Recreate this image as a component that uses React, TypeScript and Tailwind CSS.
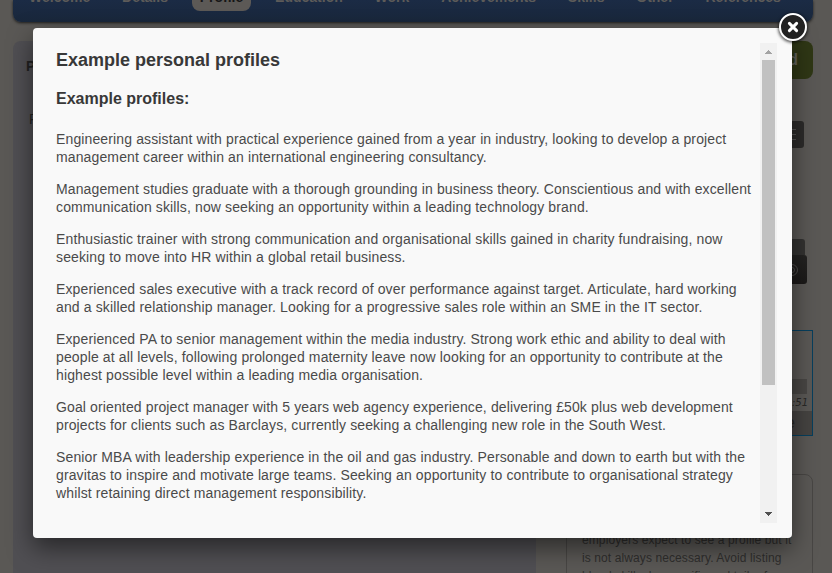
const navItems = ["Welcome", "Details", "Profile", "Education", "Work", "Achievements", "Skills", "Other", "References"];

const profiles = [
  ["Engineering assistant with practical experience gained from a year in industry, looking to develop a project", "management career within an international engineering consultancy."],
  ["Management studies graduate with a thorough grounding in business theory. Conscientious and with excellent", "communication skills, now seeking an opportunity within a leading technology brand."],
  ["Enthusiastic trainer with strong communication and organisational skills gained in charity fundraising, now", "seeking to move into HR within a global retail business."],
  ["Experienced sales executive with a track record of over performance against target. Articulate, hard working", "and a skilled relationship manager. Looking for a progressive sales role within an SME in the IT sector."],
  ["Experienced PA to senior management within the media industry. Strong work ethic and ability to deal with", "people at all levels, following prolonged maternity leave now looking for an opportunity to contribute at the", "highest possible level within a leading media organisation."],
  ["Goal oriented project manager with 5 years web agency experience, delivering £50k plus web development", "projects for clients such as Barclays, currently seeking a challenging new role in the South West."],
  ["Senior MBA with leadership experience in the oil and gas industry. Personable and down to earth but with the", "gravitas to inspire and motivate large teams. Seeking an opportunity to contribute to organisational strategy", "whilst retaining direct management responsibility."]
];

function TopNav() {
  return (
    <nav className="flex h-[22px] shrink-0 items-end rounded-b-lg bg-linear-to-b from-[#1b2b45] to-[#19273b] pl-2 shadow-[0_1px_3px_rgba(0,0,0,0.7)]">
      {navItems.map((item) => (
        <span
          key={item}
          className={`mr-[15.8px] mb-[11px] flex h-[30px] items-end rounded-lg px-2 pb-[6px] text-sm leading-[16px] font-bold ${
            item === "Profile" ? "bg-[#5c5956] text-[#161616]" : "text-[#5d5b59]"
          }`}
        >
          {item}
        </span>
      ))}
    </nav>
  );
}

function Sidebar() {
  return (
    <aside className="flex w-[247px] flex-col">
      <div className="flex h-[38px] items-center justify-end rounded-lg bg-[#2f3715] pr-[15px] text-base font-bold text-[#62635a]">Upload</div>
      <div className="mt-[42px] mr-[9px] flex h-[27px] items-center justify-end rounded-[3px] bg-[#2c2b2a] pr-2">
        <div className="flex w-3 flex-col gap-1">
          <span className="h-px bg-[#565453]" />
          <span className="h-px bg-[#565453]" />
          <span className="h-px bg-[#565453]" />
        </div>
      </div>
      <div className="mt-[91px] mr-2 h-4 rounded-t-[3px] bg-[#333231]" />
      <div className="mr-[6px] flex h-[29px] items-center justify-end rounded-[3px] bg-linear-to-b from-[#242322] to-[#1b1918] pr-2">
        <svg width="14" height="14" viewBox="0 0 14 14" fill="none" stroke="#4b4949">
          <circle cx="7" cy="7" r="5.5" />
          <circle cx="7" cy="7" r="2.5" />
        </svg>
      </div>
      <div className="mt-[46px] flex h-[106px] flex-col border border-[#073f5d]">
        <div className="mt-12 mr-[5px] h-[15px] shrink-0 bg-[#484644]" />
        <div className="flex h-[17px] shrink-0 items-center justify-end pr-1 font-['DejaVu_Sans',sans-serif] text-[10px] text-[#292827] italic">12:51</div>
        <div className="flex flex-1 items-center justify-end bg-[#454341] pr-[17px] text-base text-[#282726]">Time</div>
      </div>
      <div className="mt-[38px] h-[140px] rounded-lg border border-[#484644] px-[15px] pt-[56px] text-xs leading-[18px] tracking-[0.1px] whitespace-nowrap text-[#2f2e2d]">
        <p>employers expect to see a profile but it</p>
        <p>is not always necessary. Avoid listing</p>
        <p>bland skills, be specific and tailor for</p>
      </div>
    </aside>
  );
}

function Scrollbar() {
  return (
    <div className="flex w-[17px] shrink-0 flex-col items-center bg-[#f1f1f1]">
      <svg className="h-[17px] w-[17px] shrink-0" viewBox="0 0 17 17" fill="#a3a3a3" shapeRendering="crispEdges">
        <path d="M8 7h1v1h1v1h1v1h1v1H5v-1h1V9h1V8h1z" />
      </svg>
      <div className="h-[325px] w-[13px] bg-[#c1c1c1]" />
      <svg className="mt-auto h-[17px] w-[17px] shrink-0" viewBox="0 0 17 17" fill="#505050" shapeRendering="crispEdges">
        <path d="M5 6h7v1h-1v1h-1v1H9v1H8V9H7V8H6V7H5z" />
      </svg>
    </div>
  );
}

function ProfilesDialog() {
  return (
    <div role="dialog" className="absolute top-7 left-[33px] flex h-[510px] w-[759px] rounded bg-[#f9f9f9] p-[15px] text-[#4a4a4a] shadow-[0_10px_25px_rgba(0,0,0,0.5)]">
      <div className="min-w-0 flex-1 overflow-hidden pl-2 whitespace-nowrap">
        <h2 className="mt-[7px] text-lg leading-5 font-bold text-[#383838]">Example personal profiles</h2>
        <h3 className="mt-[19px] text-base leading-5 font-bold text-[#383838]">Example profiles:</h3>
        <div className="mt-[21px] space-y-[14px] text-sm leading-[18px] tracking-[0.128px]">
          {profiles.map((lines) => (
            <p key={lines[0]}>
              {lines.map((line) => (
                <span key={line} className="block">{line}</span>
              ))}
            </p>
          ))}
        </div>
      </div>
      <Scrollbar />
      <button type="button" aria-label="Close" className="absolute -top-[15px] -right-[15px] flex h-7 w-7 items-center justify-center rounded-full border-2 border-white bg-[#222] shadow-[0_1px_3px_1px_rgba(0,0,0,0.6)]">
        <svg width="12" height="12" viewBox="0 0 12 12" stroke="#fff" strokeWidth="3" strokeLinecap="round">
          <path d="M2.4 2.4l7.2 7.2M9.6 2.4L2.4 9.6" />
        </svg>
      </button>
    </div>
  );
}

export default function App() {
  return (
    <div className="relative h-[573px] w-[832px] overflow-hidden bg-[#5a5855] font-['Liberation_Sans',Arial,sans-serif]">
      <div className="ml-[13px] flex h-full w-[800px] flex-col">
        <TopNav />
        <div className="mt-[19px] flex justify-between">
          <main className="h-[560px] w-[523px] rounded-lg bg-[#504f53] px-[13px] pt-[15px] text-[#222]">
            <h1 className="text-sm font-bold">Profile</h1>
            <p className="mt-[33px] pl-[3px] text-sm">Personal profile</p>
          </main>
          <Sidebar />
        </div>
      </div>
      <ProfilesDialog />
    </div>
  );
}
